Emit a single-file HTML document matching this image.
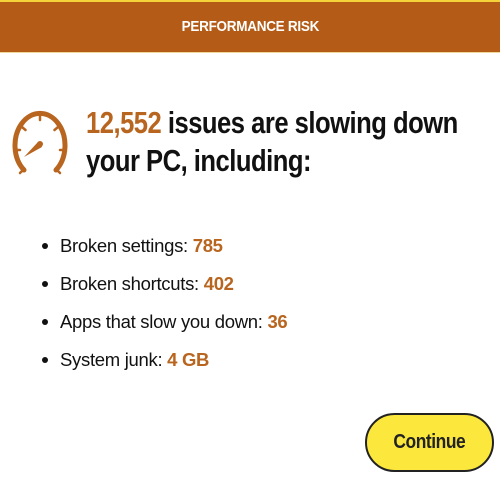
<!DOCTYPE html>
<html><head><style>
body{margin:0;width:500px;height:500px;background:#fff;font-family:"Liberation Sans",sans-serif;position:relative;overflow:hidden}
.bar{position:absolute;left:0;top:0;width:500px;height:52px;background:#b45c17;border-top:2px solid #f3d23a;box-sizing:border-box;color:#fff;font-weight:bold;font-size:15px;text-align:center;line-height:50px;letter-spacing:-0.3px}
.bar span{display:inline-block;transform:scaleX(0.9)}
.bar:after{content:"";position:absolute;left:0;right:0;bottom:-1px;height:1px;background:#f0d89a}
h1{position:absolute;left:86px;top:104px;margin:0;font-size:31px;line-height:38px;font-weight:bold;color:#111;letter-spacing:-0.6px;white-space:nowrap;transform:scaleX(0.825);transform-origin:0 0}
h1 span{color:#b8651f}
ul{position:absolute;left:40px;top:233px;margin:0;padding:0;list-style:none;font-size:18.5px;color:#111;letter-spacing:-0.3px}
li{height:38px;line-height:26px;position:relative;padding-left:20px}
li:before{content:"";position:absolute;left:2px;top:10px;width:6px;height:6px;border-radius:50%;background:#111}
li b{color:#b8651f}
.btn{position:absolute;left:365px;top:413px;width:129px;height:59px;box-sizing:border-box;border:2.5px solid #222;border-radius:30px;background:#fce83c;font-weight:bold;font-size:20px;text-align:center;line-height:54px;color:#222;letter-spacing:-0.5px}
.btn span{display:inline-block;transform:scaleX(0.87)}
</style></head><body>
<div class="bar"><span>PERFORMANCE RISK</span></div>
<svg style="position:absolute;left:0;top:100px" width="80" height="90" viewBox="0 0 80 90">
<path d="M24 70 A25 32 0 1 1 56 70" fill="none" stroke="#b8651f" stroke-width="5" stroke-linecap="round"/>
<g stroke="#b8651f" stroke-width="2.5" stroke-linecap="round">
<line x1="40" y1="15" x2="40" y2="20"/>
<line x1="22" y1="27" x2="25.5" y2="30"/>
<line x1="58" y1="27" x2="54.5" y2="30"/>
<line x1="16" y1="50" x2="20" y2="50"/>
<line x1="64" y1="50" x2="60" y2="50"/>
<line x1="23" y1="70" x2="20" y2="73"/>
<line x1="57" y1="70" x2="60" y2="73"/>
</g>
<path d="M24 57 L38 42 L42 47 Z" fill="#b8651f"/>
<circle cx="40" cy="44" r="3" fill="#b8651f"/>
</svg>
<h1><span>12,552</span> issues are slowing down<br>your PC, including:</h1>
<ul>
<li>Broken settings: <b>785</b></li>
<li>Broken shortcuts: <b>402</b></li>
<li>Apps that slow you down: <b>36</b></li>
<li>System junk: <b>4 GB</b></li>
</ul>
<div class="btn"><span>Continue</span></div>
</body></html>
